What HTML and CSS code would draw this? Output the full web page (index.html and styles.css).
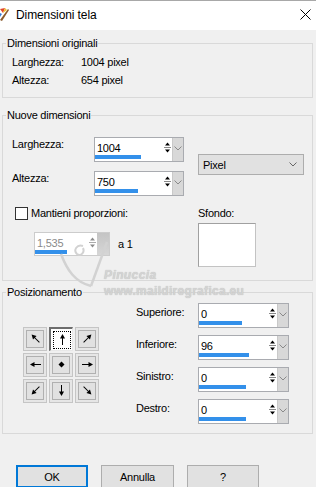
FILE: index.html
```html
<!DOCTYPE html>
<html>
<head>
    <title>Dimensioni tela</title>
    <link rel="stylesheet" href="styles.css">
</head>
<body>
    <div class="titlebar">
        <svg class="app-icon" width="9" height="13" viewBox="0 0 9 13">
            <path d="M0 1L5 0L3 5Z" fill="#e0452b"/>
            <path d="M3 5L5 0L7 2Z" fill="#f2c230"/>
            <path d="M8 1L9 2L2 13L0 12Z" fill="#8a5a2b"/>
            <path d="M0 5L2 6L0 9Z" fill="#3a7bd5"/>
        </svg>
        <span class="title">Dimensioni tela</span>
        <svg class="close-btn" width="11" height="11" viewBox="0 0 11 11">
            <path d="M0.5 0.5L10.5 10.5M10.5 0.5L0.5 10.5" stroke="#000" stroke-width="1"/>
        </svg>
    </div>

    <fieldset class="group group-orig">
        <legend>Dimensioni originali</legend>
        <div class="info">
            <div class="info-row"><span class="info-label">Larghezza:</span><span>1004 pixel</span></div>
            <div class="info-row"><span class="info-label">Altezza:</span><span>654 pixel</span></div>
        </div>
    </fieldset>

    <fieldset class="group group-new">
        <legend>Nuove dimensioni</legend>
        <div class="size-grid">
            <span class="field-label">Larghezza:</span>
            <div class="spin">
                <div class="spin-field">
                    <span class="spin-value">1004</span>
                    <div class="spin-track"><div class="spin-fill" style="width: 46px;"></div></div>
                </div>
                <svg class="spin-arrows" width="9" height="14" viewBox="0 0 9 14">
                    <path d="M2 5.5L4.5 2.5L7 5.5Z" fill="#000"/>
                    <path d="M1 7.5H8" stroke="#888"/>
                    <path d="M2 9.5H7L4.5 12.5Z" fill="#000"/>
                </svg>
                <div class="spin-drop"><svg width="8" height="5" viewBox="0 0 8 5"><path d="M0.5 0.5L4 4L7.5 0.5" fill="none" stroke="#8a8a8a"/></svg></div>
            </div>
            <div class="unit-select">
                <span>Pixel</span>
                <svg width="8" height="5" viewBox="0 0 8 5"><path d="M0.5 0.5L4 4L7.5 0.5" fill="none" stroke="#666"/></svg>
            </div>
            <span class="field-label">Altezza:</span>
            <div class="spin">
                <div class="spin-field">
                    <span class="spin-value">750</span>
                    <div class="spin-track"><div class="spin-fill" style="width: 43px;"></div></div>
                </div>
                <svg class="spin-arrows" width="9" height="14" viewBox="0 0 9 14">
                    <path d="M2 5.5L4.5 2.5L7 5.5Z" fill="#000"/>
                    <path d="M1 7.5H8" stroke="#888"/>
                    <path d="M2 9.5H7L4.5 12.5Z" fill="#000"/>
                </svg>
                <div class="spin-drop"><svg width="8" height="5" viewBox="0 0 8 5"><path d="M0.5 0.5L4 4L7.5 0.5" fill="none" stroke="#8a8a8a"/></svg></div>
            </div>
        </div>

        <div class="lower">
            <div class="ratio-col">
                <div class="check"><span class="check-box"></span><span>Mantieni proporzioni:</span></div>
                <div class="ratio-row">
                    <div class="spin spin-ratio">
                        <div class="spin-field">
                            <span class="spin-value">1,535</span>
                            <div class="spin-track"><div class="spin-fill" style="width: 32px;"></div></div>
                        </div>
                        <svg class="spin-arrows" width="9" height="14" viewBox="0 0 9 14">
                            <path d="M2 5.5L4.5 2.5L7 5.5Z" fill="#8c8c8c"/>
                            <path d="M1 7.5H8" stroke="#aaa"/>
                            <path d="M2 9.5H7L4.5 12.5Z" fill="#8c8c8c"/>
                        </svg>
                        <div class="spin-drop"></div>
                    </div>
                    <span>a 1</span>
                </div>
            </div>
            <div class="bg-col">
                <span>Sfondo:</span>
                <div class="swatch"></div>
            </div>
        </div>

        <svg class="wm-logo" width="60" height="60" viewBox="0 0 60 60">
            <path d="M2 14C8 30 16 42 32 46" fill="none" stroke="#d2d2d2" stroke-width="2.5"/>
            <path d="M48 2L32 46" fill="none" stroke="#d2d2d2" stroke-width="2.5"/>
            <path d="M24 6C18 4 14 10 18 14C22 17 26 12 24 8" fill="none" stroke="#d2d2d2" stroke-width="2"/>
        </svg>
        <span class="wm-name">Pinuccia</span>
        <span class="wm-site">www.maildiregrafica.eu</span>
    </fieldset>

    <fieldset class="group group-pos">
        <legend>Posizionamento</legend>
        <div class="pos-layout">
            <div class="anchor-grid">
                <div class="cell"><div class="cell-inner"><svg width="13" height="13" viewBox="0 0 13 13"><g transform="rotate(-45 6.5 6.5)"><path d="M6.5 12V4" stroke="#000"/><path d="M6.5 1L4 5.5H9Z"/></g></svg></div></div>
                <div class="cell cell-active"><div class="cell-inner"><svg width="13" height="13" viewBox="0 0 13 13"><path d="M6.5 12V4" stroke="#000"/><path d="M6.5 1L4 5.5H9Z"/></svg></div></div>
                <div class="cell"><div class="cell-inner"><svg width="13" height="13" viewBox="0 0 13 13"><g transform="rotate(45 6.5 6.5)"><path d="M6.5 12V4" stroke="#000"/><path d="M6.5 1L4 5.5H9Z"/></g></svg></div></div>
                <div class="cell"><div class="cell-inner"><svg width="13" height="13" viewBox="0 0 13 13"><g transform="rotate(-90 6.5 6.5)"><path d="M6.5 12V4" stroke="#000"/><path d="M6.5 1L4 5.5H9Z"/></g></svg></div></div>
                <div class="cell"><div class="cell-inner"><svg width="13" height="13" viewBox="0 0 13 13"><path d="M6.5 3.5L9.5 6.5L6.5 9.5L3.5 6.5Z"/></svg></div></div>
                <div class="cell"><div class="cell-inner"><svg width="13" height="13" viewBox="0 0 13 13"><g transform="rotate(90 6.5 6.5)"><path d="M6.5 12V4" stroke="#000"/><path d="M6.5 1L4 5.5H9Z"/></g></svg></div></div>
                <div class="cell"><div class="cell-inner"><svg width="13" height="13" viewBox="0 0 13 13"><g transform="rotate(-135 6.5 6.5)"><path d="M6.5 12V4" stroke="#000"/><path d="M6.5 1L4 5.5H9Z"/></g></svg></div></div>
                <div class="cell"><div class="cell-inner"><svg width="13" height="13" viewBox="0 0 13 13"><g transform="rotate(180 6.5 6.5)"><path d="M6.5 12V4" stroke="#000"/><path d="M6.5 1L4 5.5H9Z"/></g></svg></div></div>
                <div class="cell"><div class="cell-inner"><svg width="13" height="13" viewBox="0 0 13 13"><g transform="rotate(135 6.5 6.5)"><path d="M6.5 12V4" stroke="#000"/><path d="M6.5 1L4 5.5H9Z"/></g></svg></div></div>
            </div>

            <div class="offsets">
                <div class="offset-row">
                    <span class="offset-label">Superiore:</span>
                    <div class="spin spin-wide">
                        <div class="spin-field">
                            <span class="spin-value">0</span>
                            <div class="spin-track"><div class="spin-fill" style="width: 43px;"></div></div>
                        </div>
                        <svg class="spin-arrows" width="9" height="14" viewBox="0 0 9 14"><path d="M2 5.5L4.5 2.5L7 5.5Z" fill="#000"/><path d="M1 7.5H8" stroke="#888"/><path d="M2 9.5H7L4.5 12.5Z" fill="#000"/></svg>
                        <div class="spin-drop"><svg width="8" height="5" viewBox="0 0 8 5"><path d="M0.5 0.5L4 4L7.5 0.5" fill="none" stroke="#8a8a8a"/></svg></div>
                    </div>
                </div>
                <div class="offset-row">
                    <span class="offset-label">Inferiore:</span>
                    <div class="spin spin-wide">
                        <div class="spin-field">
                            <span class="spin-value">96</span>
                            <div class="spin-track"><div class="spin-fill" style="width: 50px;"></div></div>
                        </div>
                        <svg class="spin-arrows" width="9" height="14" viewBox="0 0 9 14"><path d="M2 5.5L4.5 2.5L7 5.5Z" fill="#000"/><path d="M1 7.5H8" stroke="#888"/><path d="M2 9.5H7L4.5 12.5Z" fill="#000"/></svg>
                        <div class="spin-drop"><svg width="8" height="5" viewBox="0 0 8 5"><path d="M0.5 0.5L4 4L7.5 0.5" fill="none" stroke="#8a8a8a"/></svg></div>
                    </div>
                </div>
                <div class="offset-row">
                    <span class="offset-label">Sinistro:</span>
                    <div class="spin spin-wide">
                        <div class="spin-field">
                            <span class="spin-value">0</span>
                            <div class="spin-track"><div class="spin-fill" style="width: 47px;"></div></div>
                        </div>
                        <svg class="spin-arrows" width="9" height="14" viewBox="0 0 9 14"><path d="M2 5.5L4.5 2.5L7 5.5Z" fill="#000"/><path d="M1 7.5H8" stroke="#888"/><path d="M2 9.5H7L4.5 12.5Z" fill="#000"/></svg>
                        <div class="spin-drop"><svg width="8" height="5" viewBox="0 0 8 5"><path d="M0.5 0.5L4 4L7.5 0.5" fill="none" stroke="#8a8a8a"/></svg></div>
                    </div>
                </div>
                <div class="offset-row">
                    <span class="offset-label">Destro:</span>
                    <div class="spin spin-wide">
                        <div class="spin-field">
                            <span class="spin-value">0</span>
                            <div class="spin-track"><div class="spin-fill" style="width: 47px;"></div></div>
                        </div>
                        <svg class="spin-arrows" width="9" height="14" viewBox="0 0 9 14"><path d="M2 5.5L4.5 2.5L7 5.5Z" fill="#000"/><path d="M1 7.5H8" stroke="#888"/><path d="M2 9.5H7L4.5 12.5Z" fill="#000"/></svg>
                        <div class="spin-drop"><svg width="8" height="5" viewBox="0 0 8 5"><path d="M0.5 0.5L4 4L7.5 0.5" fill="none" stroke="#8a8a8a"/></svg></div>
                    </div>
                </div>
            </div>
        </div>
    </fieldset>

    <div class="buttons">
        <button class="btn btn-default" type="button">OK</button>
        <button class="btn btn-wide" type="button">Annulla</button>
        <button class="btn" type="button">?</button>
    </div>
</body>
</html>
```

FILE: styles.css
```css
body {
    margin: 0;
    width: 316px;
    height: 487px;
    overflow: hidden;
    background: #f0f0f0;
    font-family: "Segoe UI", "Liberation Sans", Arial, sans-serif;
    font-size: 11px;
    letter-spacing: -0.25px;
    line-height: 14px;
    color: #000;
}

/* title bar */
.titlebar {
    height: 30px;
    box-sizing: border-box;
    border-top: 1px solid #a8a8a8;
    background: #fff;
    display: flex;
    align-items: center;
    padding-bottom: 2px;
}
.app-icon {
    margin-right: 7px;
}
.title {
    flex: 1;
    font-size: 12px;
    letter-spacing: -0.1px;
}
.close-btn {
    margin-right: 5px;
}

/* group boxes */
.group {
    margin: 0 3px 0 2px;
    padding: 0;
    border: 1px solid #d9d9d9;
    min-width: 0;
}
.group legend {
    margin-left: 3px;
    padding: 0 1px;
    line-height: 14px;
}
.group-orig {
    margin-top: 6px;
}
.group-new {
    margin-top: 10px;
    position: relative;
}
.group-pos {
    margin-top: 4px;
}

.info {
    padding: 3px 0 8px 9px;
}
.info-row {
    display: flex;
    height: 18px;
    align-items: center;
}
.info-label {
    width: 69px;
}

/* nuove dimensioni */
.size-grid {
    display: grid;
    grid-template-columns: 82px 90px 120px;
    row-gap: 9px;
    padding: 15px 0 0 9px;
}
.field-label {
    align-self: start;
}
.unit-select {
    grid-column: 3;
    grid-row: 1 / span 2;
    align-self: start;
    margin: 17px 0 0 14px;
    height: 21px;
    box-sizing: border-box;
    border: 1px solid #adadad;
    background: #e1e1e1;
    display: flex;
    align-items: center;
    justify-content: space-between;
    padding: 0 6px 0 4px;
}

/* spin box with slider bar */
.spin {
    display: flex;
    height: 25px;
    box-sizing: border-box;
    border: 1px solid #a9abb0;
    background: #fff;
}
.spin-field {
    flex: 1;
    display: flex;
    flex-direction: column;
}
.spin-value {
    flex: 1;
    padding: 3px 0 0 2px;
}
.spin-track {
    height: 4px;
    margin-bottom: 2px;
}
.spin-fill {
    height: 4px;
    background: #3390ea;
}
.spin-arrows {
    margin-top: 2px;
}
.spin-drop {
    width: 11px;
    background: #d8d8d8;
    border-left: 1px solid #c9c9c9;
    display: flex;
    justify-content: center;
    padding-top: 8px;
    box-sizing: border-box;
}

.lower {
    display: flex;
    padding: 10px 0 13px 9px;
}
.ratio-col {
    width: 186px;
}
.check {
    display: flex;
    align-items: center;
    gap: 3px;
    margin-left: 3px;
    height: 14px;
}
.check-box {
    width: 13px;
    height: 13px;
    box-sizing: border-box;
    border: 1px solid #333;
    background: #fff;
}
.ratio-row {
    display: flex;
    align-items: center;
    gap: 8px;
    margin: 12px 0 0 22px;
}
.spin-ratio {
    width: 76px;
    height: 24px;
    border-color: #cccccc;
    color: #8a8a8a;
}
.spin-ratio .spin-drop {
    width: 12px;
    background: linear-gradient(#c4c4c4, #d6d6d6);
    border-left: none;
}
.bg-col {
    display: flex;
    flex-direction: column;
}
.swatch {
    width: 58px;
    height: 44px;
    margin-top: 3px;
    box-sizing: border-box;
    border: 1px solid #c3c3c3;
    border-top-color: #a0a0a0;
    border-left-color: #a0a0a0;
    background: #fff;
}

/* watermark over the dialog */
.wm-logo {
    position: absolute;
    left: 56px;
    top: 118px;
}
.wm-name {
    position: absolute;
    left: 101px;
    top: 146px;
    font-weight: bold;
    font-style: italic;
    font-size: 12px;
    letter-spacing: 0.4px;
    color: #d4d4d4;
    text-shadow: 0 0 1px #b5b5b5;
}
.wm-site {
    position: absolute;
    left: 101px;
    top: 162px;
    font-weight: bold;
    font-size: 12px;
    letter-spacing: 0.3px;
    color: #d4d4d4;
    text-shadow: 0 0 1px #b5b5b5;
}

/* posizionamento */
.pos-layout {
    display: flex;
    align-items: center;
    padding: 4px 0 9px 20px;
}
.anchor-grid {
    display: grid;
    grid-template-columns: repeat(3, 24px);
    grid-auto-rows: 24px;
    gap: 2px;
    margin-top: 2px;
}
.cell {
    box-sizing: border-box;
    border: 1px solid #c5c5c5;
    background: #e6e6e6;
    padding: 2px;
}
.cell-inner {
    height: 100%;
    box-sizing: border-box;
    border: 1px solid #b0b0b0;
    background: #e1e1e1;
    display: flex;
    align-items: center;
    justify-content: center;
}
.cell-active {
    background: #fff;
    border-width: 2px 1px 1px 2px;
    border-color: #6d6d6d #e8e8e8 #e8e8e8 #6d6d6d;
    padding: 2px 1px 1px 2px;
}
.cell-active .cell-inner {
    background: #fff;
    border: 1px dotted #000;
}
.offsets {
    margin-left: 37px;
    display: flex;
    flex-direction: column;
    gap: 7px;
}
.offset-row {
    display: flex;
}
.offset-label {
    width: 62px;
    padding-top: 2px;
}
.spin-wide {
    width: 91px;
}

/* dialog buttons */
.buttons {
    display: flex;
    gap: 13px;
    padding-left: 16px;
    margin-top: 31px;
}
.btn {
    width: 72px;
    height: 23px;
    box-sizing: border-box;
    border: 1px solid #adadad;
    background: #e1e1e1;
    font: inherit;
    letter-spacing: inherit;
    color: #000;
    padding: 0;
}
.btn-wide {
    width: 73px;
}
.btn-default {
    border: 2px solid #0078d7;
}
```
